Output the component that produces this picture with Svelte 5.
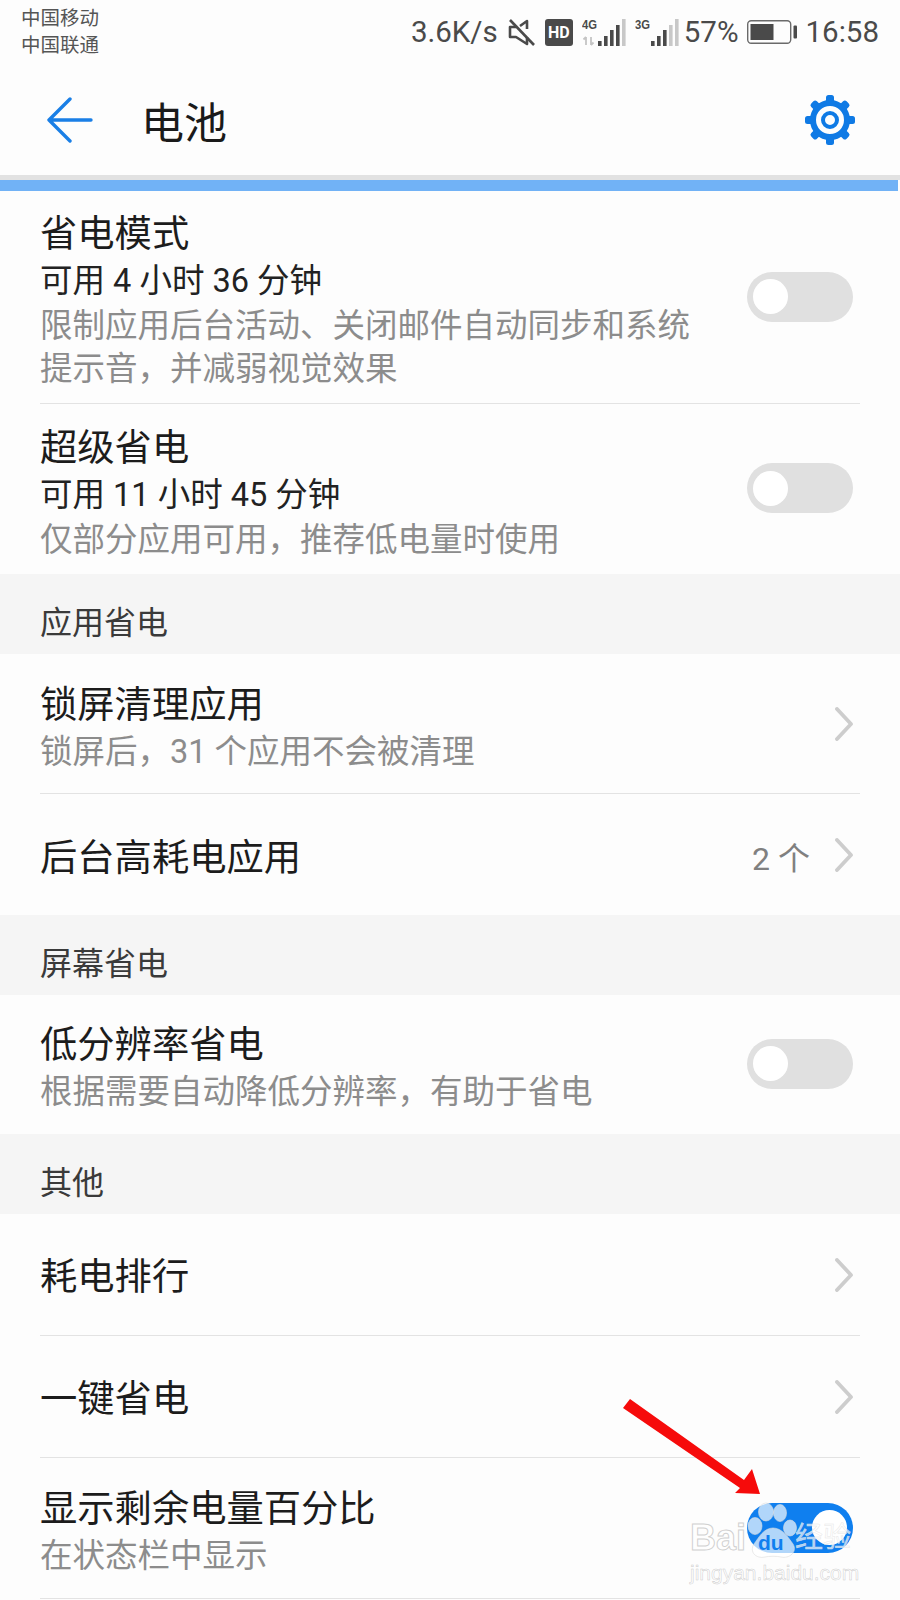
<script lang="ts">
type Row = {
	title: string;
	sub?: string;
	desc?: string[];
	toggle?: boolean;
	on?: boolean;
	chevron?: boolean;
	value?: string;
	h: number;
	pt: number;
};

const first: Row[] = [
	{
		title: "省电模式",
		sub: "可用 4 小时 36 分钟",
		desc: ["限制应用后台活动、关闭邮件自动同步和系统", "提示音，并减弱视觉效果"],
		toggle: true,
		h: 213,
		pt: 20,
	},
	{
		title: "超级省电",
		sub: "可用 11 小时 45 分钟",
		desc: ["仅部分应用可用，推荐低电量时使用"],
		toggle: true,
		h: 170,
		pt: 21,
	},
];

const sections: { label: string; rows: Row[] }[] = [
	{
		label: "应用省电",
		rows: [
			{ title: "锁屏清理应用", desc: ["锁屏后，31 个应用不会被清理"], chevron: true, h: 140, pt: 28 },
			{ title: "后台高耗电应用", value: "2 个", chevron: true, h: 121, pt: 41 },
		],
	},
	{
		label: "屏幕省电",
		rows: [{ title: "低分辨率省电", desc: ["根据需要自动降低分辨率，有助于省电"], toggle: true, h: 139, pt: 27 }],
	},
	{
		label: "其他",
		rows: [
			{ title: "耗电排行", chevron: true, h: 122, pt: 40 },
			{ title: "一键省电", chevron: true, h: 122, pt: 40 },
			{ title: "显示剩余电量百分比", desc: ["在状态栏中显示"], toggle: true, on: true, h: 141, pt: 28 },
		],
	},
];

const gearTeeth = [0, 45, 90, 135, 180, 225, 270, 315];
</script>

{#snippet signal(label: string, arrows: boolean, grey: number)}
	<svg class="signal" width="44" height="30" viewBox="0 0 44 30">
		<text x="0" y="12" class="net" textLength="15" lengthAdjust="spacingAndGlyphs">{label}</text>
		{#if arrows}
			<path d="M4 28v-8M1.5 22.5l2.5-2.5M9 20v8M9 28l2.5-2.5" stroke="#c4c4c4" stroke-width="1.8" fill="none" />
		{/if}
		{#each [0, 1, 2, 3, 4] as b}
			<rect
				x={16 + b * 6}
				y={[24, 19, 13, 8, 2][b]}
				width="3.6"
				height={[5, 10, 16, 21, 27][b]}
				fill={b >= grey ? "#c8c8c8" : "#4a4a4a"}
			/>
		{/each}
	</svg>
{/snippet}

{#snippet listRow(row: Row, last: boolean)}
	<div class="row" style="height: {row.h}px">
		<div class="text" style="padding-top: {row.pt}px">
			<div class="title">{row.title}</div>
			{#if row.sub}<div class="sub">{row.sub}</div>{/if}
			{#each row.desc ?? [] as line}
				<div class="desc">{line}</div>
			{/each}
		</div>
		{#if row.value}<span class="value">{row.value}</span>{/if}
		{#if row.chevron}
			<svg class="chevron" width="18" height="34" viewBox="0 0 18 34">
				<path d="M2 2 L16 17 L2 32" fill="none" stroke="#cdcdcd" stroke-width="3.8" stroke-linecap="round" stroke-linejoin="round" />
			</svg>
		{/if}
		{#if row.toggle}
			<div class="toggle" class:on={row.on}><span class="knob"></span></div>
		{/if}
		{#if !last}<div class="divider"></div>{/if}
	</div>
{/snippet}

<div class="screen">
	<header class="status">
		<div class="carriers">
			<div>中国移动</div>
			<div>中国联通</div>
		</div>
		<div class="status-right">
			<span class="speed">3.6K/s</span>
			<svg class="mute" width="28" height="28" viewBox="0 0 28 28">
				<path d="M8 9 L2 9 V19 H8 L19 26 V19 M19 11 V3 L12 8" fill="none" stroke="#4a4a4a" stroke-width="2.6" stroke-linejoin="round" />
				<path d="M2 2 L26 27" stroke="#4a4a4a" stroke-width="2.6" />
			</svg>
			<span class="hd">HD</span>
			{@render signal("4G", true, 4)}
			{@render signal("3G", false, 3)}
			<span class="pct">57%</span>
			<svg class="battery" width="50" height="24" viewBox="0 0 50 24">
				<rect x="0.7" y="0.7" width="43" height="22.6" rx="3.5" fill="none" stroke="#6a6a6a" stroke-width="1.4" />
				<rect x="3.5" y="4" width="23" height="16" fill="#4a4a4a" />
				<rect x="46.5" y="5.5" width="3.5" height="13" rx="1" fill="#4a4a4a" />
			</svg>
			<span class="clock">16:58</span>
		</div>
	</header>

	<nav class="bar">
		<svg class="back" width="46" height="46" viewBox="0 0 46 46">
			<path d="M23 2 L2 23 L23 44 M2 23 H44" fill="none" stroke="#1a7fe6" stroke-width="3.4" stroke-linecap="round" stroke-linejoin="round" />
		</svg>
		<h1>电池</h1>
		<svg class="gear" width="50" height="50" viewBox="0 0 50 50">
			{#each gearTeeth as deg}
				<rect x="21" y="0" width="8" height="10" rx="2.5" fill="#0f7ae5" transform="rotate({deg} 25 25)" />
			{/each}
			<circle cx="25" cy="25" r="17" fill="none" stroke="#0f7ae5" stroke-width="6" />
			<circle cx="25" cy="25" r="7" fill="none" stroke="#0f7ae5" stroke-width="4" />
		</svg>
	</nav>

	<div class="rule"></div>
	<div class="progress"></div>

	{#each first as row, i}
		{@render listRow(row, i === first.length - 1)}
	{/each}

	{#each sections as section}
		<div class="section">{section.label}</div>
		{#each section.rows as row, i}
			{@render listRow(row, i === section.rows.length - 1 && section.label !== "其他")}
		{/each}
	{/each}

	<svg class="arrow" width="150" height="105" viewBox="0 0 150 105">
		<path d="M3 10 L10 1 L124 82 L132 71 L140 96 L115 95 L120 90 Z" fill="#f60b0b" />
	</svg>

	<div class="watermark">
		<span class="bai">Bai</span>
		<svg class="paw" width="66" height="70" viewBox="0 0 66 70">
			<g fill="#ffffff" fill-opacity="0.68" stroke="#dcdcdc" stroke-opacity="0.6">
				<ellipse cx="23" cy="13" rx="7.5" ry="9" />
				<ellipse cx="37" cy="14" rx="6.5" ry="8.5" />
				<ellipse cx="47" cy="29" rx="6.5" ry="8" />
				<ellipse cx="12" cy="27" rx="7" ry="8.5" />
				<path d="M30 29 C39 29 45 38 50 45 C55 53 46 60 38 58 C34 57 26 57 22 58 C13 60 6 53 11 45 C16 38 21 29 30 29 Z" />
			</g>
			<text x="15" y="51" class="du">du</text>
		</svg>
		<span class="jy">经验</span>
		<div class="domain">jingyan.baidu.com</div>
	</div>
</div>

<style>
	:global(body) {
		margin: 0;
		background: #fdfdfd;
	}

	.screen {
		position: relative;
		width: 900px;
		height: 1600px;
		overflow: hidden;
		background: #fdfdfd;
		font-family: Roboto, "Noto Sans CJK SC", sans-serif;
		color: #1c1c1c;
	}

	.status {
		display: flex;
		justify-content: space-between;
		height: 64px;
		padding: 5px 21px 0;
		box-sizing: border-box;
	}

	.carriers {
		font-size: 19.5px;
		line-height: 27px;
		color: #555;
	}

	.status-right {
		display: flex;
		align-items: center;
		height: 52px;
		margin-top: 1px;
		color: #4a4a4a;
		font-size: 29.5px;
	}

	.speed {
		margin-right: 10px;
	}

	.mute {
		margin-right: 9px;
	}

	.hd {
		display: flex;
		align-items: center;
		justify-content: center;
		width: 28px;
		height: 27px;
		margin-right: 9px;
		border-radius: 3px;
		background: #4a4a4a;
		color: #fff;
		font-size: 16px;
		font-weight: 700;
	}

	.signal {
		margin-right: 9px;
	}

	.net {
		font-size: 13.5px;
		font-weight: 700;
		fill: #4a4a4a;
		font-family: "Liberation Sans", sans-serif;
	}

	.pct {
		margin-right: 8px;
		margin-left: -4px;
	}

	.battery {
		margin-right: 9px;
	}

	.bar {
		display: flex;
		align-items: center;
		height: 111px;
		padding: 0 45px 0 47px;
		box-sizing: border-box;
	}

	.bar h1 {
		flex: 1;
		margin: 0 0 0 48px;
		font-size: 43px;
		font-weight: 400;
		color: #1a1a1a;
	}

	.rule {
		height: 5px;
		background: #e2e2e2;
	}

	.progress {
		height: 11px;
		margin-right: 2px;
		background: #71b2f6;
	}

	.row {
		position: relative;
		display: flex;
		align-items: center;
		padding: 0 47px 0 40px;
		box-sizing: border-box;
	}

	.text {
		flex: 1;
		align-self: flex-start;
	}

	.title {
		font-size: 37.3px;
		line-height: 46px;
		color: #1c1c1c;
	}

	.sub {
		margin-top: 1px;
		font-size: 32.5px;
		line-height: 47px;
		color: #222;
	}

	.desc {
		font-size: 32.5px;
		line-height: 43px;
		color: #8c8c8c;
	}

	.title + .desc {
		margin-top: 3px;
	}

	.value {
		margin-top: 3px;
		margin-right: 25px;
		font-size: 32px;
		color: #808080;
	}

	.chevron {
		flex: none;
	}

	.toggle {
		display: flex;
		align-items: center;
		flex: none;
		width: 106px;
		height: 50px;
		margin-bottom: 2px;
		padding: 0 6px;
		box-sizing: border-box;
		border-radius: 25px;
		background: #e0e0e0;
	}

	.toggle.on {
		justify-content: flex-end;
		background: #0f7fef;
	}

	.knob {
		width: 35px;
		height: 35px;
		border-radius: 50%;
		background: #fff;
	}

	.divider {
		position: absolute;
		left: 40px;
		right: 40px;
		bottom: 0;
		height: 1.5px;
		background: #e3e3e3;
	}

	.section {
		height: 80px;
		padding: 27px 0 0 40px;
		box-sizing: border-box;
		background: #f5f5f5;
		font-size: 32px;
		line-height: 44px;
		color: #3a3a3a;
	}

	.arrow {
		position: absolute;
		left: 620px;
		top: 1398px;
	}

	.watermark {
		position: absolute;
		left: 690px;
		top: 1502px;
		width: 170px;
		height: 80px;
	}

	.bai,
	.jy,
	.domain {
		position: absolute;
		color: rgba(255, 255, 255, 0.62);
		-webkit-text-stroke: 1px rgba(200, 200, 200, 0.85);
	}

	.bai {
		left: 0;
		top: 14px;
		font: 700 36px/44px "Liberation Sans", sans-serif;
	}

	.paw {
		position: absolute;
		left: 53px;
		top: -3px;
	}

	.du {
		font: 700 21px "Liberation Sans", sans-serif;
		fill: #0f7fef;
	}

	.jy {
		left: 105px;
		top: 18px;
		font-size: 28px;
		line-height: 36px;
		color: rgba(255, 255, 255, 0.68);
		-webkit-text-stroke: 0.5px rgba(225, 225, 225, 0.8);
	}

	.domain {
		left: 0;
		top: 58px;
		font: 400 21px/26px "Liberation Sans", sans-serif;
		-webkit-text-stroke: 0.5px rgba(200, 200, 200, 0.9);
	}
</style>
